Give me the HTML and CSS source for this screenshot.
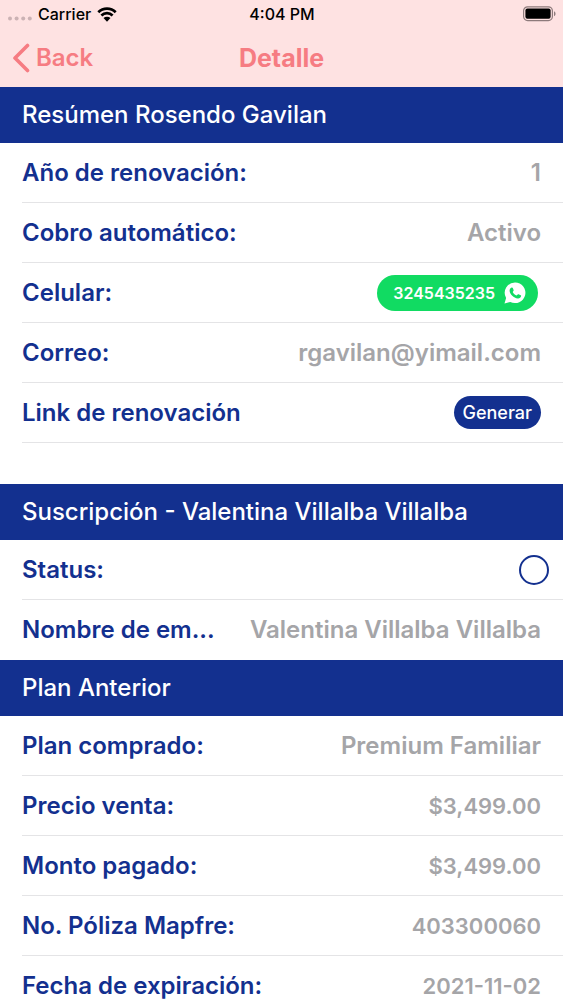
FILE: index.html
```
<!DOCTYPE html>
<html lang="es">
<head>
<meta charset="utf-8">
<meta name="viewport" content="width=device-width, initial-scale=1">
<title>Detalle</title>
<link rel="stylesheet" href="styles.css">
</head>
<body>
<div class="app">
  <header class="top">
    <div class="status-bar">
      <div class="carrier">
        <svg class="signal" viewBox="0 0 24 5" aria-hidden="true"><circle cx="2" cy="2.5" r="2"/><circle cx="8.6" cy="2.5" r="2"/><circle cx="15.2" cy="2.5" r="2"/><circle cx="21.8" cy="2.5" r="2"/></svg>
        <span>Carrier</span>
        <svg class="wifi" viewBox="0 0 20 15" aria-hidden="true"><path d="M1.3 5.2a12.4 12.4 0 0 1 17.4 0M4.4 8.5a8 8 0 0 1 11.2 0" fill="none" stroke="#000" stroke-width="2.7"/><path d="M10 14.7l-3.5-3.6a5 5 0 0 1 7 0z"/></svg>
      </div>
      <time class="clock">4:04 PM</time>
      <svg class="battery" viewBox="0 0 33 16" aria-hidden="true"><rect x=".6" y=".8" width="28.8" height="13.8" rx="4" fill="none" stroke="#8d7a7b" stroke-width="1.2"/><rect x="2.4" y="2.6" width="25.2" height="10.2" rx="2"/><path d="M31 5.2c2 .8 2 4.200 0 5z" fill="#8d7a7b"/></svg>
    </div>
    <nav class="nav">
      <button class="back" type="button">
        <svg class="chevron" viewBox="0 0 18 30" aria-hidden="true"><path d="M15.500 2.500L3 15l12.500 12.500"/></svg>
        <span>Back</span>
      </button>
      <h1 class="title">Detalle</h1>
    </nav>
  </header>
  <main class="content">
    <section class="group group-spaced">
      <h2 class="heading">Resúmen Rosendo Gavilan</h2>
      <dl class="rows">
        <div class="row"><dt>Año de renovación:</dt><dd>1</dd></div>
        <div class="row"><dt>Cobro automático:</dt><dd>Activo</dd></div>
        <div class="row"><dt>Celular:</dt><dd>
          <button class="pill phone" type="button"><span>3245435235</span>
            <svg class="whatsapp" viewBox="0 0 22 22" aria-hidden="true"><path fill="#fff" d="M11.200.5a10.300 10.300 0 1 1-4.900 19.400L.5 21.500l1.600-5.600A10.300 10.300 0 0 1 11.200.5z"/><path fill="#11db62" d="M7.700 5.500c.5-.2.900 0 1.100.5l.8 2c.1.400.1.700-.2 1l-.7.900c.9 1.700 2.200 2.900 4 3.700l1-1.200c.3-.3.500-.3.900-.2l2.100 1c.4.200.5.500.4.900-.3 1.700-1.600 2.500-3.300 2.400-4.200-.5-7.800-4.200-8.200-7.500-.1-1.600.8-3.100 2.100-3.500z"/></svg>
          </button></dd></div>
        <div class="row"><dt>Correo:</dt><dd>rgavilan@yimail.com</dd></div>
        <div class="row"><dt>Link de renovación</dt><dd><button class="pill generate" type="button">Generar</button></dd></div>
      </dl>
    </section>
    <section class="group">
      <h2 class="heading">Suscripción - Valentina Villalba Villalba</h2>
      <dl class="rows">
        <div class="row row-check"><dt><label for="status">Status:</label></dt><dd><input class="check" id="status" type="checkbox"></dd></div>
        <div class="row row-last"><dt>Nombre de em...</dt><dd>Valentina Villalba Villalba</dd></div>
      </dl>
    </section>
    <section class="group">
      <h2 class="heading">Plan Anterior</h2>
      <dl class="rows">
        <div class="row"><dt>Plan comprado:</dt><dd>Premium Familiar</dd></div>
        <div class="row"><dt>Precio venta:</dt><dd class="number">$3,499.00</dd></div>
        <div class="row"><dt>Monto pagado:</dt><dd class="number">$3,499.00</dd></div>
        <div class="row"><dt>No. Póliza Mapfre:</dt><dd class="number">403300060</dd></div>
        <div class="row"><dt>Fecha de expiración:</dt><dd class="number">2021-11-02</dd></div>
      </dl>
    </section>
  </main>
</div>
</body>
</html>
```
FILE: styles.css
```
* { box-sizing: border-box; }
body {
  margin: 0;
  background: #fff;
  color: #13308f;
  font-family: Inter, "Liberation Sans", sans-serif;
  font-size: 24px;
  font-weight: 600;
  line-height: 32px;
}
button {
  border: 0;
  font: inherit;
  cursor: pointer;
}
.app {
  display: flex;
  flex-direction: column;
  height: 100vh;
}
.top {
  flex: none;
  background: #fee2e2;
}
.status-bar {
  display: grid;
  grid-template-columns: 1fr auto 1fr;
  align-items: center;
  height: 28px;
  padding: 0 7px 0 8px;
  color: #000;
  font-size: 16px;
  font-weight: 500;
  line-height: 24px;
}
.carrier {
  display: flex;
  align-items: center;
  gap: 6px;
}
.signal {
  width: 24px;
  height: 5px;
  margin-top: 8px;
  fill: #cbb2b4;
}
.wifi { width: 20px; height: 15px; }
.battery {
  justify-self: end;
  width: 33px;
  height: 16px;
}
.nav {
  display: grid;
  grid-template-columns: 1fr auto 1fr;
  align-items: center;
  height: 59px;
  padding: 0 12px;
  color: #f67c82;
}
.back {
  display: flex;
  align-items: center;
  justify-self: start;
  gap: 6px;
  padding: 0;
  background: none;
  color: inherit;
}
.chevron {
  width: 18px;
  height: 30px;
  fill: none;
  stroke: currentColor;
  stroke-width: 3.6;
  stroke-linecap: round;
  stroke-linejoin: round;
}
.title {
  margin: 0;
  font-size: 25px;
  font-weight: 700;
}
.content {
  flex: 1;
  overflow-y: auto;
  scrollbar-width: none;
}
.group-spaced { margin-bottom: 41px; }
.heading {
  margin: 0;
  padding: 12px 22px;
  background: #13308f;
  color: #fff;
  font-size: 24px;
  font-weight: 500;
}
.rows { margin: 0; }
.row {
  display: flex;
  align-items: center;
  justify-content: space-between;
  height: 60px;
  margin-left: 22px;
  padding-right: 22px;
  border-bottom: 1px solid #e4e4e6;
  white-space: nowrap;
}
.row-last { border-bottom-color: transparent; }
.row-check { padding-right: 14px; }
.row dd {
  display: flex;
  margin: 0;
  color: #a5a5a8;
}
.row .number { font-size: 22px; }
.pill {
  display: flex;
  align-items: center;
  border-radius: 18px;
  color: #fff;
}
.phone {
  gap: 9px;
  height: 36px;
  margin-right: 3px;
  padding: 0 12px 0 16px;
  background: #11db62;
  font-size: 16px;
}
.whatsapp { width: 22px; height: 22px; }
.generate {
  height: 33px;
  padding: 0 9px;
  background: #13308f;
  font-size: 18px;
  font-weight: 500;
}
.check {
  width: 30px;
  height: 30px;
  margin: 0;
  border: 2px solid #13308f;
  border-radius: 50%;
  appearance: none;
}
.check:checked { background: #13308f; }
```
